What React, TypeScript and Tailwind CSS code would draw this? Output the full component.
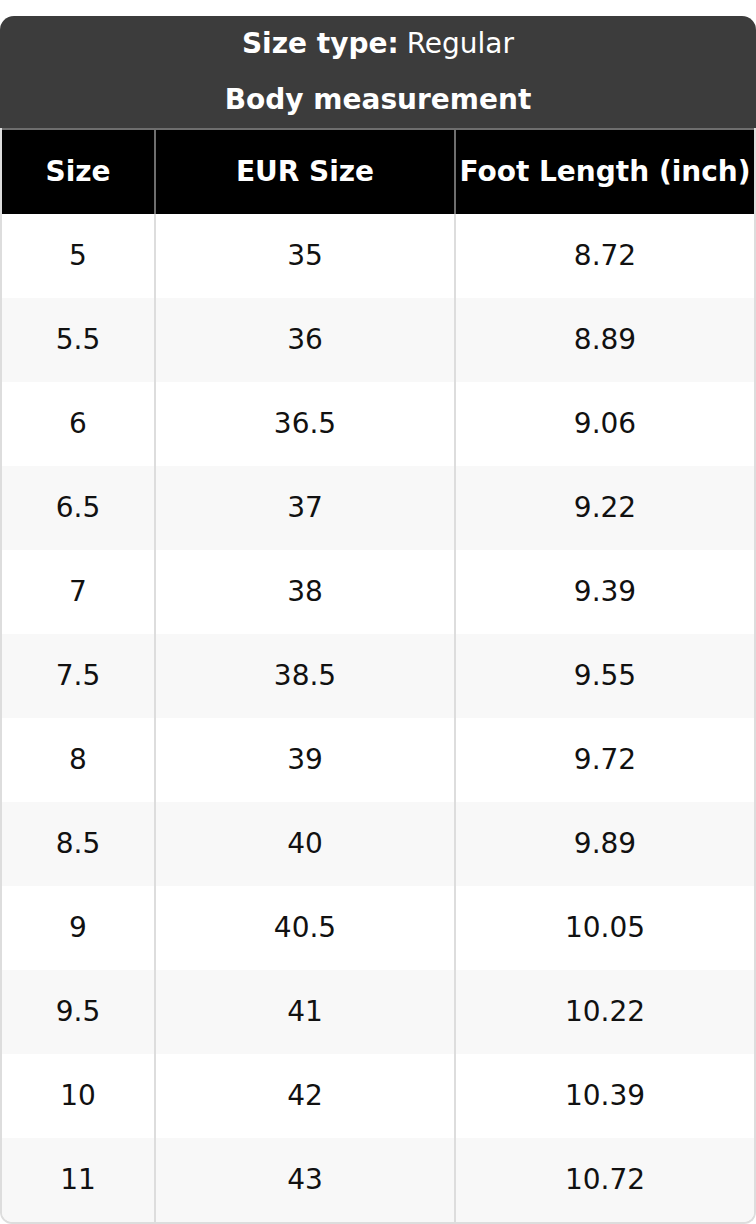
const rows: [string, string, string][] = [
  ["5", "35", "8.72"],
  ["5.5", "36", "8.89"],
  ["6", "36.5", "9.06"],
  ["6.5", "37", "9.22"],
  ["7", "38", "9.39"],
  ["7.5", "38.5", "9.55"],
  ["8", "39", "9.72"],
  ["8.5", "40", "9.89"],
  ["9", "40.5", "10.05"],
  ["9.5", "41", "10.22"],
  ["10", "42", "10.39"],
  ["11", "43", "10.72"],
];

export default function App() {
  return (
    <div className="bg-white pt-4 font-['DejaVu_Sans',sans-serif]">
      <div className="rounded-t-[14px] bg-[#3c3c3c] text-white text-[28px] text-center">
        <div className="h-14 flex items-center justify-center">
          <span className="font-bold">Size type:</span>
          <span className="ml-[8px]">Regular</span>
        </div>
        <div className="h-14 flex items-center justify-center font-bold">
          Body measurement
        </div>
      </div>
      <div className="overflow-hidden rounded-b-[12px] border-x-2 border-b-2 border-[#dddddd]">
        <div className="grid grid-cols-[152px_1fr_1fr] h-[86px] bg-black text-white text-[28px] font-bold border-t-2 border-[#6e6e6e]">
          <div className="flex items-center justify-center">Size</div>
          <div className="flex items-center justify-center border-l-2 border-[#6e6e6e]">EUR Size</div>
          <div className="flex items-center justify-center border-l-2 border-[#6e6e6e] whitespace-nowrap">
            Foot Length (inch)
          </div>
        </div>
        {rows.map(([size, eur, foot], i) => (
          <div
            key={size}
            className={
              "grid grid-cols-[152px_1fr_1fr] h-[84px] text-[28px] text-[#111111] " +
              (i % 2 === 1 ? "bg-[#f8f8f8]" : "bg-white")
            }
          >
            <div className="flex items-center justify-center">{size}</div>
            <div className="flex items-center justify-center border-l-2 border-[#dddddd]">{eur}</div>
            <div className="flex items-center justify-center border-l-2 border-[#dddddd]">{foot}</div>
          </div>
        ))}
      </div>
    </div>
  );
}
